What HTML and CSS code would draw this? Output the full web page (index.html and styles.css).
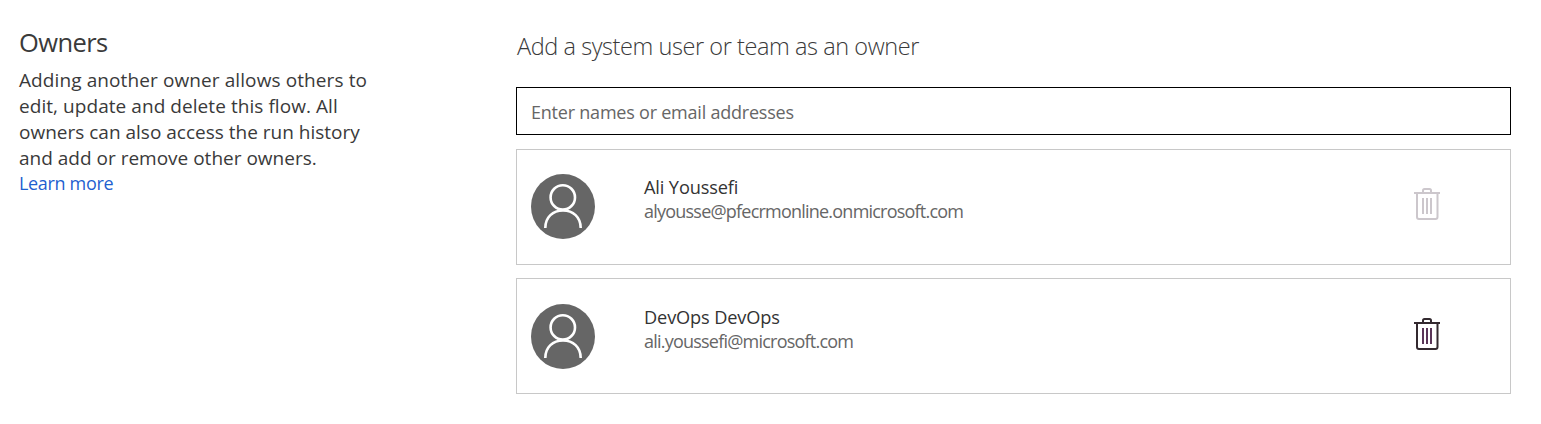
FILE: index.html
```
<!DOCTYPE html>
<html lang="en">
<head>
<meta charset="utf-8">
<title>Owners</title>
<link rel="stylesheet" href="styles.css">
</head>
<body>
<svg class="defs" width="0" height="0" aria-hidden="true">
  <symbol id="person" viewBox="0 0 64 65">
    <ellipse cx="32" cy="32.5" rx="32" ry="32.5" fill="#666"/>
    <g fill="none" stroke="#fff" stroke-width="2.6">
      <circle cx="31.8" cy="23.4" r="12.2"/>
      <path d="M14.3 54 C14.3 43 22 36.5 32 36.5 S49.7 43 49.7 54"/>
    </g>
  </symbol>
  <symbol id="trash" viewBox="0 0 26 32">
    <g fill="none" stroke="currentColor" stroke-width="2">
      <path d="M0 5H26"/>
      <path d="M9 5V2.5Q9 1 10.5 1H15.5Q17 1 17 2.5V5"/>
      <path d="M3 5V29Q3 31 5 31H21.5Q23.5 31 23.5 29V5"/>
      <path class="bars" d="M9 10V26M13 10V26M17 10V26"/>
    </g>
  </symbol>
</svg>
<main class="page">
  <section class="intro">
    <h1 class="title">Owners</h1>
    <p class="text">
      <span class="line l1">Adding another owner allows others to</span>
      <span class="line l2">edit, update and delete this flow. All</span>
      <span class="line">owners can also access the run history</span>
      <span class="line">and add or remove other owners.</span>
    </p>
    <a class="link">Learn more</a>
  </section>
  <section class="owners">
    <h2 class="subtitle">Add a system user or team as an owner</h2>
    <div class="field"><span class="placeholder">Enter names or email addresses</span></div>
    <div class="card first">
      <svg class="avatar"><use href="#person"/></svg>
      <div class="who"><span class="name">Ali Youssefi</span><span class="mail">alyousse@pfecrmonline.onmicrosoft.com</span></div>
      <svg class="trash disabled"><use href="#trash"/></svg>
    </div>
    <div class="card">
      <svg class="avatar"><use href="#person"/></svg>
      <div class="who"><span class="name">DevOps DevOps</span><span class="mail">ali.youssefi@microsoft.com</span></div>
      <svg class="trash"><use href="#trash"/></svg>
    </div>
  </section>
</main>
</body>
</html>
```
FILE: styles.css
```
* { box-sizing: border-box; }
body {
  margin: 0;
  background: #fff;
  color: #3a3a3a;
  font-family: "Open Sans", "Noto Sans", sans-serif;
  white-space: nowrap;
}
.defs { display: none; }
.page { display: flex; height: 424px; padding: 0 30px 0 19px; }
.intro { display: flex; flex-direction: column; align-items: flex-start; width: 497px; padding-top: 24px; }
.title { margin: 0; font-size: 25.5px; line-height: 36px; font-weight: 400; letter-spacing: -0.6px; }
.text { display: flex; flex-direction: column; align-items: flex-start; margin: 7px 0 -1px; font-size: 19px; line-height: 26px; }
.l1 { letter-spacing: 0.1px; }
.l2 { letter-spacing: 0.06px; }
.link { font-size: 18px; line-height: 26px; letter-spacing: -0.33px; color: #1f5fd0; }
.owners { flex: 1; padding-top: 30px; }
.subtitle { width: max-content; margin: 0 0 24px 1px; font-size: 23.5px; line-height: 33px; font-weight: 300; letter-spacing: -0.43px; }
.field { display: flex; align-items: center; height: 48px; padding: 1px 14px 0; border: 1px solid #000; font-size: 18px; letter-spacing: -0.22px; color: #666; }
.card { display: flex; align-items: flex-start; height: 116px; margin-top: 13px; padding: 25px 70px 0 14px; border: 1px solid #c8c8c8; }
.card.first { margin-top: 14px; padding-top: 24px; }
.avatar { width: 64px; height: 65px; margin-right: 49px; }
.who { display: flex; flex: 1; flex-direction: column; align-items: flex-start; padding-top: 1px; font-size: 18px; line-height: 24px; }
.name { color: #333; font-size: 18.2px; letter-spacing: -0.14px; }
.mail { color: #666; letter-spacing: -0.78px; }
.trash { --bars: #5a3558; width: 26px; height: 32px; margin-top: 14px; color: #33292f; }
.bars { stroke: var(--bars); }
.disabled { --bars: #ccc7cc; color: #ccc7cc; }
```
